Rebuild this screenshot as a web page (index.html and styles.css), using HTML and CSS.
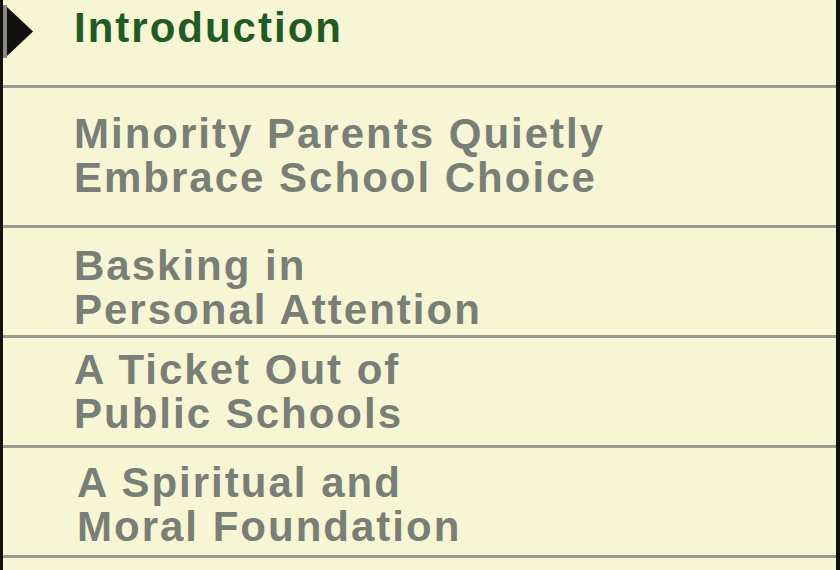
FILE: index.html
```html
<!DOCTYPE html>
<html lang="en">
<head>
<meta charset="UTF-8" />
<meta name="viewport" content="width=device-width, initial-scale=1.0" />
<title>Contents</title>
<link rel="stylesheet" href="styles.css">
</head>
<body>

<div class="toc">
  <div class="toc-item toc-item--current">
    <svg class="marker" width="30" height="53" viewBox="0 0 30 53">
      <rect x="0" y="0" width="4" height="53" fill="#8c8c82" />
      <polygon points="4,2 30,26.5 4,51" fill="#111111" />
    </svg>
    <span class="label">Introduction</span>
  </div>
  <div class="toc-item toc-item--two">Minority Parents Quietly<br>Embrace School Choice</div>
  <div class="toc-item toc-item--three">Basking in<br>Personal Attention</div>
  <div class="toc-item toc-item--four">A Ticket Out of<br>Public Schools</div>
  <div class="toc-item toc-item--five">A Spiritual and<br>Moral Foundation</div>
  <div class="toc-rest"></div>
</div>

</body>
</html>
```

FILE: styles.css
```css
body {
  margin: 0;
  background-color: #f6f6d4;
}
.toc {
  height: 570px;
  box-sizing: border-box;
  border-left: 3px solid #111111;
  border-right: 4px solid #111111;
  background-color: #f6f6d4;
  font-family: "Liberation Sans", Arial, sans-serif;
  font-weight: bold;
  font-size: 42px;
  line-height: 44px;
  letter-spacing: 2px;
  color: #797e76;
}
.toc-item {
  box-sizing: border-box;
  height: 110px;
  padding-left: 71px;
  border-bottom: 3px solid #9a9c93;
}
.toc-item--current {
  display: flex;
  align-items: flex-start;
  height: 88px;
  padding-top: 5px;
  padding-left: 0;
  color: #225a24;
}
.toc-item--current .marker {
  flex-shrink: 0;
  margin-right: 41px;
}
.toc-item--current .label {
  padding-top: 1px;
}
.toc-item--two {
  height: 140px;
  padding-top: 24px;
}
.toc-item--three {
  padding-top: 16px;
}
.toc-item--four {
  padding-top: 10px;
}
.toc-item--five {
  padding-top: 13px;
  padding-left: 74px;
}
.toc-rest {
  height: 12px;
}
```
